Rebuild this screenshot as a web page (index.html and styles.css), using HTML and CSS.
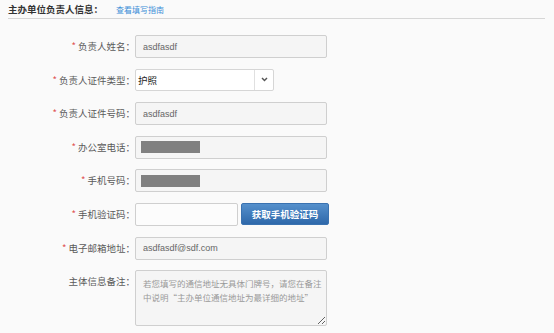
FILE: index.html
```html
<!DOCTYPE html>
<html lang="zh-CN">
<head>
    <meta charset="UTF-8">
    <title>主办单位负责人信息</title>
    <link rel="stylesheet" href="styles.css">
</head>
<body>
    <div class="section-head">
        <h2>主办单位负责人信息：</h2>
        <a href="#" class="guide">查看填写指南</a>
    </div>

    <form class="info-form">
        <div class="form-row">
            <label><span class="req">*</span> 负责人姓名：</label>
            <input type="text" class="field" value="asdfasdf">
        </div>

        <div class="form-row">
            <label><span class="req">*</span> 负责人证件类型：</label>
            <div class="select-box">
                <span class="select-value">护照</span>
                <span class="select-arrow">
                    <svg width="7" height="5" viewBox="0 0 7 5"><path d="M1 1 L3.5 3.6 L6 1" fill="none" stroke="#555" stroke-width="1.4"/></svg>
                </span>
            </div>
        </div>

        <div class="form-row">
            <label><span class="req">*</span> 负责人证件号码：</label>
            <input type="text" class="field" value="asdfasdf">
        </div>

        <div class="form-row">
            <label><span class="req">*</span> 办公室电话：</label>
            <div class="field masked"><span class="mask"></span></div>
        </div>

        <div class="form-row">
            <label><span class="req">*</span> 手机号码：</label>
            <div class="field masked"><span class="mask"></span></div>
        </div>

        <div class="form-row">
            <label><span class="req">*</span> 手机验证码：</label>
            <input type="text" class="field short">
            <button type="button" class="btn-code">获取手机验证码</button>
        </div>

        <div class="form-row">
            <label><span class="req">*</span> 电子邮箱地址：</label>
            <input type="text" class="field" value="asdfasdf@sdf.com">
        </div>

        <div class="form-row">
            <label>主体信息备注：</label>
            <textarea class="field note" placeholder="若您填写的通信地址无具体门牌号，请您在备注中说明“主办单位通信地址为最详细的地址”"></textarea>
        </div>
    </form>
</body>
</html>
```

FILE: styles.css
```css
body {
    margin: 0;
    padding: 0 9px 0 8px;
    background-color: #fafafa;
    font-family: "Noto Sans CJK SC", "Liberation Sans", sans-serif;
    color: #555;
}

.section-head {
    display: flex;
    align-items: center;
    height: 18px;
    border-bottom: 1px solid #d6d6d6;
}

.section-head h2 {
    margin: 0;
    font-size: 9.5px;
    font-weight: bold;
    color: #333;
}

.guide {
    margin-left: 13px;
    font-size: 8px;
    color: #3d8fd8;
    text-decoration: none;
}

.info-form {
    display: flex;
    flex-direction: column;
    gap: 10.6px;
    padding-top: 16px;
}

.form-row {
    display: flex;
    align-items: flex-start;
}

.form-row label {
    width: 127px;
    text-align: right;
    font-size: 9.5px;
    line-height: 23px;
    color: #5a5a5a;
    white-space: nowrap;
}

.req {
    color: #e05050;
}

.field {
    box-sizing: border-box;
    width: 192px;
    height: 23px;
    margin: 0;
    padding: 0 7px;
    border: 1px solid #cfcfcf;
    border-radius: 2px;
    background-color: #f5f5f5;
    font-family: "Liberation Sans", sans-serif;
    font-size: 9px;
    color: #666;
    outline: none;
}

.masked {
    display: flex;
    align-items: center;
    padding-left: 5px;
}

.mask {
    width: 59px;
    height: 12px;
    background-color: #808080;
}

.field.short {
    width: 103px;
    background-color: #fcfcfc;
}

.btn-code {
    margin-left: 3px;
    width: 88px;
    height: 22px;
    border: 1px solid #3a72b0;
    border-radius: 2px;
    background: linear-gradient(#5590cc, #2e68aa);
    color: #fff;
    font-family: "Noto Sans CJK SC", sans-serif;
    font-size: 9.5px;
    font-weight: bold;
    padding: 0;
    cursor: pointer;
}

.select-box {
    box-sizing: border-box;
    display: flex;
    width: 139px;
    height: 22px;
    border: 1px solid #d6d6d6;
    border-radius: 2px;
    background-color: #fff;
}

.select-value {
    flex: 1;
    padding-left: 2px;
    font-size: 9.5px;
    line-height: 20px;
    color: #222;
}

.select-arrow {
    width: 18px;
    display: flex;
    align-items: center;
    justify-content: center;
    border-left: 1px solid #e0e0e0;
}

.note {
    height: 56px;
    padding: 5px 2px 4px 7px;
    font-family: "Noto Sans CJK SC", sans-serif;
    font-size: 8.5px;
    line-height: 14px;
    resize: both;
}

.note::placeholder {
    color: #999;
}
```
